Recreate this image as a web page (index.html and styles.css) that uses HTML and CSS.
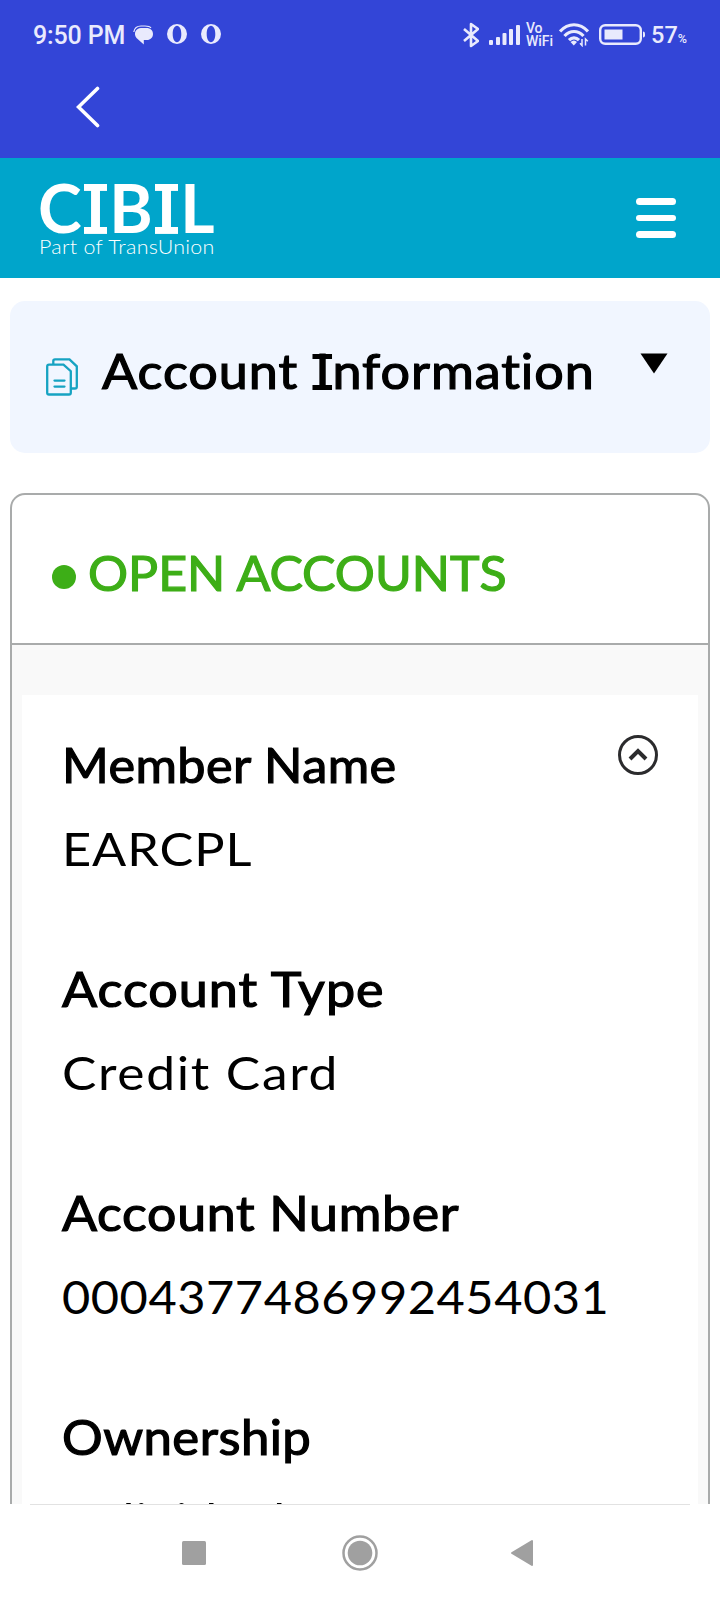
FILE: index.html
```html
<!DOCTYPE html>
<html lang="en">
<head>
<meta charset="utf-8">
<title>CIBIL Account Information</title>
<link rel="stylesheet" href="styles.css">
</head>
<body>
<header class="appbar">
  <div class="status">
    <div class="status-left">
      <span class="clock">9:50 PM</span>
      <svg class="chat" width="20" height="20" viewBox="0 0 20 20"><path d="M.8 7C1.500 3 4 1 8 1h4c3 0 5 .5 6 2" fill="none" stroke="#e9eafd" stroke-width="1.200"/><path d="M8 3h5.500C17.500 3 20 5.500 20 9s-2.700 6-6 6h-3.200v4.500L3.500 13C0 8.500 3 3 8 3Z" fill="#e9eafd"/></svg>
      <svg class="opera" width="20" height="20" viewBox="0 0 20 20"><path fill="#e9eafd" fill-rule="evenodd" d="M10 0a10 10 0 1 0 0 20a10 10 0 0 0 0-20Zm0 1.800c2.700 0 4.300 3.600 4.300 8.200s-1.600 8.200-4.300 8.200S5.700 14.600 5.700 10 7.300 1.800 10 1.800Z"/></svg>
      <svg class="opera" width="20" height="20" viewBox="0 0 20 20"><path fill="#e9eafd" fill-rule="evenodd" d="M10 0a10 10 0 1 0 0 20a10 10 0 0 0 0-20Zm0 1.800c2.700 0 4.300 3.600 4.300 8.200s-1.600 8.200-4.300 8.200S5.700 14.600 5.700 10 7.300 1.800 10 1.800Z"/></svg>
    </div>
    <div class="status-right">
      <svg width="16" height="26" viewBox="0 0 16 26"><path d="M1 7l14 12-7 5v-22L15 7 1 19" fill="none" stroke="#e9eafd" stroke-width="2.600" stroke-linejoin="round"/></svg>
      <svg class="signal" width="31" height="20" viewBox="0 0 31 20" fill="#e9eafd"><rect y="15" width="4" height="5" rx="1"/><rect x="7" y="12" width="4" height="8" rx="1"/><rect x="13.500" y="8" width="4" height="12" rx="1"/><rect x="20" y="4" width="4" height="16" rx="1"/><rect x="27" width="4" height="20" rx="1"/></svg>
      <span class="vowifi"><span>Vo</span><span>WiFi</span></span>
      <svg class="wifi" width="30" height="24" viewBox="0 0 30 24"><g fill="none" stroke="#e9eafd" stroke-width="3.200"><path d="M1 8.500C9-.5 21-.5 29 8.500"/><path d="M5.500 13c5.500-6 13.500-6 19 0"/><path d="M10 17.200c3-3.200 7-3.200 10 0"/></g><path d="M11.500 19q3.500-3 6.500 0l-3.200 3.500Z" fill="#e9eafd"/><path d="M23 16v6.500l-2-2.200M26.500 22.500V16l2.300 2.200" fill="none" stroke="#e9eafd" stroke-width="1.500"/></svg>
      <svg class="battery" width="46" height="22" viewBox="0 0 46 22"><rect x="1.200" y="1.200" width="40.600" height="18.600" rx="5" fill="none" stroke="#e9eafd" stroke-width="2.400"/><rect x="5.500" y="5.500" width="18" height="10" fill="#e9eafd"/><path d="M44 7.500q2 0 2 2v2q0 2-2 2Z" fill="#e9eafd"/></svg>
      <span class="percent">57<small>%</small></span>
    </div>
  </div>
  <svg class="back" width="24" height="42" viewBox="0 0 24 42"><path d="M21.500 2.500 2.500 21l19 18.500" fill="none" stroke="#fff" stroke-width="3.600" stroke-linecap="round"/></svg>
</header>
<div class="brandbar">
  <div class="logo">
    <div class="cibil">C<span class="slab">I</span>B<span class="slab">I</span>L</div>
    <div class="tagline"><span class="wide">Part of TransUnion</span></div>
  </div>
  <div class="menu"><i></i><i></i><i></i></div>
</div>
<main class="content">
  <section class="section-title">
    <svg class="docs" width="32" height="38" viewBox="0 0 32 38"><g fill="none" stroke="#16a3c2" stroke-width="2.300"><path d="M1.200 8.500q0-1.800 1.800-1.800h14.500l7.300 6.500v21.500q0 1.800-1.800 1.800H3q-1.800 0-1.800-1.800Z"/><path d="M7.300 6.500V3q0-1.700 1.700-1.700h14.500l7.300 7v20.400q0 1.800-1.800 1.800h-4"/><path d="M8.500 22.600h10M8.500 28.600h10" stroke-linecap="round"/></g></svg>
    <h1><span class="wide">Account <span class="slab">I</span>nformation</span></h1>
    <svg class="caret" width="28" height="22" viewBox="0 0 28 22"><path d="M.5 .5h27L14 20.500Z"/></svg>
  </section>
  <section class="accounts">
    <h2><i class="dot"></i><span class="wide">OPEN ACCOUNTS</span></h2>
    <div class="tray">
      <div class="account">
        <dl>
          <dt class="member"><span class="wide">Member Name</span></dt>
          <dd class="member-value"><span class="wide">EARCPL</span></dd>
          <dt class="type"><span class="wide">Account Type</span></dt>
          <dd class="type-value"><span class="wide">Credit Card</span></dd>
          <dt class="number"><span class="wide">Account Number</span></dt>
          <dd class="number-value"><span class="wide">0004377486992454031</span></dd>
          <dt class="owner"><span class="wide">Ownership</span></dt>
          <dd class="owner-value"><span class="wide">Individual</span></dd>
        </dl>
        <svg class="collapse" width="40" height="40" viewBox="0 0 40 40" fill="none" stroke="#2b2b2d"><circle cx="20" cy="20" r="18.500" stroke-width="3"/><path d="m12 24 8-8 8 8" stroke-width="4"/></svg>
      </div>
    </div>
  </section>
</main>
<nav class="navbar">
  <svg width="24" height="24" viewBox="0 0 24 24"><rect width="24" height="24" rx="1.500" fill="#a0a0a0"/></svg>
  <svg class="home" width="36" height="36" viewBox="0 0 36 36"><circle cx="18" cy="18" r="16.500" fill="none" stroke="#a0a0a0" stroke-width="2.500"/><circle cx="18" cy="18" r="12.300" fill="#a0a0a0"/></svg>
  <svg width="24" height="28" viewBox="0 0 24 28"><path d="M2 14 22 2v24Z" fill="#a0a0a0" stroke="#a0a0a0" stroke-width="2" stroke-linejoin="round"/></svg>
</nav>
</body>
</html>
```
FILE: styles.css
```css
* { box-sizing: border-box; }
body {
  margin: 0;
  width: 720px;
  height: 1600px;
  display: flex;
  flex-direction: column;
  overflow: hidden;
  background: #fff;
  color: #000;
  font-family: Lato, "Liberation Sans", sans-serif;
  font-variant-ligatures: none;
}
svg { display: block; flex: none; }
h1, h2, dl, dd { margin: 0; }

/* Extended-width lettering; --stretch is set by the surrounding block */
.wide { display: block; width: max-content; transform: scaleX(var(--stretch)); transform-origin: 0 0; }

.appbar { flex: none; height: 158px; background: #3345d7; }
.status {
  display: flex;
  justify-content: space-between;
  height: 70px;
  padding: 0 33px;
  color: #e9eafd;
  font-family: Roboto, sans-serif;
  font-weight: 500;
}
.status-left, .status-right { display: flex; align-items: center; }
.clock { width: 92px; font-size: 25px; letter-spacing: -.15px; white-space: nowrap; }
.chat { margin-left: 8px; }
.opera { margin: -2px 0 0 14px; }
.signal { margin-left: 10px; }
.vowifi { display: flex; flex-direction: column; margin-left: 6px; font-size: 14px; line-height: 13px; }
.wifi { margin-left: 6px; }
.battery { margin-left: 10px; }
.percent { margin-left: 6px; font-size: 23.500px; }
.percent small { font-size: 12.500px; }
.back { margin: 16px 0 0 76px; }

.brandbar {
  flex: none;
  display: flex;
  justify-content: space-between;
  height: 120px;
  padding: 24px 44px 0 40px;
  background: #00a5cb;
  color: #fff;
}

/* Capital I with serif bars at cap height and baseline */
.slab {
  --bar: linear-gradient(currentColor, currentColor);
  padding: 0 2.500px;
  background:
    var(--bar) 0 .24em / 100% .105em no-repeat,
    var(--bar) 0 .895em / 100% .105em no-repeat;
  letter-spacing: 0;
}
.cibil { margin: 1px 0 0 -2px; font-size: 66px; line-height: 50px; font-weight: 700; }
.cibil .slab { padding: 0 2px; margin: 0 2px; }
.tagline { --stretch: 1.1; margin-top: 2px; font-size: 19.500px; line-height: 24px; font-weight: 300; letter-spacing: .25px; margin-left: -1px; }
.menu { display: flex; flex-direction: column; gap: 10px; width: 40px; padding-top: 16px; }
.menu i { height: 6.700px; border-radius: 4px; background: #fff; }

.content { flex: 1; min-height: 0; overflow: hidden; padding: 23px 10px 0; }
.section-title {
  display: flex;
  height: 152px;
  padding: 40px 42px 0 36px;
  border-radius: 15px;
  background: #f1f6ff;
}
.docs { margin-top: 17px; }
.section-title h1 { --stretch: 1.085; flex: 1; padding-left: 24px; letter-spacing: .9px; }
.caret { margin: 12px 0 0 -2px; }
h1, h2, dt { font-size: 48px; line-height: 60px; font-weight: 400; white-space: nowrap; -webkit-text-stroke: 1.200px currentColor; }

.accounts { margin-top: 40px; border: 2px solid #a9abab; border-radius: 15px; }
.accounts h2 {
  --stretch: 1.043;
  display: flex;
  height: 150px;
  padding: 48px 0 0 40px;
  border-bottom: 2px solid #a9abab;
  color: #3dae17;
}
.dot { width: 24px; height: 24px; margin: 22px 12px 0 0; border-radius: 50%; background: currentColor; }
.tray { padding: 50px 10px; background: #f9f9f9; }
.account { display: flex; justify-content: space-between; padding: 40px; background: #fff; }
dd { margin: 24px 0 80px; font-size: 46px; line-height: 60px; }
.member { --stretch: 1.05; letter-spacing: .4px; }
.member-value { --stretch: 1.1; letter-spacing: .8px; }
.type { --stretch: 1.085; letter-spacing: .9px; }
.type-value { --stretch: 1.12; letter-spacing: 1.500px; }
.number { --stretch: 1.08; letter-spacing: .65px; }
.number-value { --stretch: 1.06; letter-spacing: .5px; }
.owner { --stretch: 1.06; letter-spacing: .4px; }
.owner-value { --stretch: 1.1; margin-top: 23px; letter-spacing: .9px; }

.navbar {
  flex: none;
  display: flex;
  justify-content: space-between;
  align-items: center;
  height: 96px;
  margin: 0 30px;
  padding: 0 156px 0 152px;
  border-top: 1px solid #e2e2e2;
}
.home { margin-left: 4px; }
```
